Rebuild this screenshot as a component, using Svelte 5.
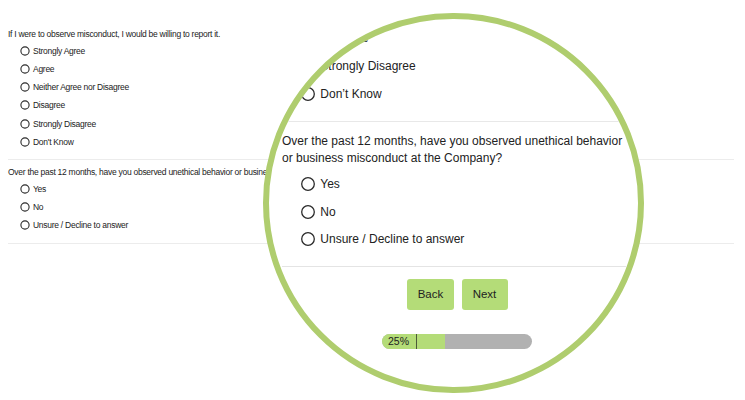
<script lang="ts">
  interface Question {
    text: string;
    options: string[];
  }

  const agreement: Question = {
    text: 'If I were to observe misconduct, I would be willing to report it.',
    options: [
      'Strongly Agree',
      'Agree',
      'Neither Agree nor Disagree',
      'Disagree',
      'Strongly Disagree',
      "Don't Know"
    ]
  };

  const observed: Question = {
    text: 'Over the past 12 months, have you observed unethical behavior or business misconduct at the Company?',
    options: ['Yes', 'No', 'Unsure / Decline to answer']
  };

  const questions = [agreement, observed];

  // Options of the first question that are visible in the lens
  const lensOptions = ['Disagree', 'Strongly Disagree', 'Don’t Know'];

  let progress = 25;
  let filled = 42;
</script>

<div class="page">
  <div class="survey">
    {#each questions as question}
      <section class="question">
        <p class="question-text">{question.text}</p>
        <div class="options">
          {#each question.options as option}
            <div class="option">
              <svg class="radio" viewBox="0 0 10 10"><circle cx="5" cy="5" r="4.1" /></svg>
              <span class="label">{option}</span>
            </div>
          {/each}
        </div>
      </section>
    {/each}
  </div>

  <!-- Magnified part of the survey -->
  <div class="lens">
    <div class="lens-content">
      <div class="options first">
        {#each lensOptions as option}
          <div class="option">
            <svg class="radio" viewBox="0 0 14 14"><circle cx="7" cy="7" r="6.3" /></svg>
            <span class="label">{option}</span>
          </div>
        {/each}
      </div>
      <section class="lens-question">
        <p class="question-text">{observed.text}</p>
        <div class="options">
          {#each observed.options as option}
            <div class="option">
              <svg class="radio" viewBox="0 0 14 14"><circle cx="7" cy="7" r="6.3" /></svg>
              <span class="label">{option}</span>
            </div>
          {/each}
        </div>
      </section>
      <div class="buttons">
        <button class="back">Back</button>
        <button class="next">Next</button>
      </div>
      <div class="progress">
        <div class="progress-fill" style="width: {filled}%">
          <span class="progress-value">{progress}%</span>
        </div>
      </div>
    </div>
  </div>
</div>

<style>
  :global(body) {
    background: #fff;
  }

  .page {
    position: relative;
    box-sizing: border-box;
    width: 745px;
    height: 400px;
    padding: 28px 11px 0 8px;
    overflow: hidden;
    font-family: "Liberation Sans", Arial, sans-serif;
    color: #222;
  }

  .question-text {
    margin: 0;
  }

  .option {
    display: flex;
    align-items: center;
  }

  .radio {
    display: block;
    flex-shrink: 0;
    fill: none;
    stroke: #2a2a2a;
    stroke-width: 1.3;
  }

  /* Survey behind the lens */
  .question {
    border-bottom: 1px solid #ececec;
    margin-bottom: 6px;
    font-size: 8.5px;
    letter-spacing: -0.27px;
    white-space: nowrap;
  }

  .question .question-text {
    height: 14px;
    line-height: 13px;
  }

  .question .options {
    padding: 0 0 8px 12px;
  }

  .question .option {
    height: 18.15px;
    gap: 3px;
  }

  .question .radio {
    width: 10px;
    height: 10px;
    stroke-width: 1.1;
  }

  .question:last-child .options {
    padding-bottom: 9px;
  }

  /* Lens */
  .lens {
    position: absolute;
    top: 12.5px;
    left: 263px;
    box-sizing: border-box;
    width: 380.5px;
    height: 380.5px;
    border: 6px solid #afcd6e;
    border-radius: 50%;
    background: #fff;
    overflow: hidden;
  }

  .lens-content {
    padding: 6px 0 0 13px;
    font-size: 12px;
  }

  .lens-content .options {
    padding-left: 19.3px;
  }

  .lens-content .option {
    height: 27.7px;
    gap: 5px;
  }

  .lens-content .radio {
    width: 14px;
    height: 14px;
  }

  .first {
    padding-bottom: 13px;
    border-bottom: 1px solid #e8e8e8;
  }

  .lens-question {
    padding-top: 11px;
    padding-bottom: 12.5px;
    border-bottom: 1px solid #e4e4e4;
  }

  .lens-question .question-text {
    width: 350px;
    margin-bottom: 3.5px;
    line-height: 17px;
  }

  .buttons {
    display: flex;
    gap: 7.5px;
    padding: 12px 0 0 125px;
  }

  button {
    height: 31px;
    padding: 0;
    border: none;
    border-radius: 3px;
    background: #b4dc78;
    font-family: inherit;
    font-size: 11.5px;
    color: #222;
  }

  .back {
    width: 47px;
  }

  .next {
    width: 46px;
  }

  .progress {
    width: 150px;
    height: 15px;
    margin: 24px 0 0 100px;
    border-radius: 8px;
    background: #b1b1b1;
    overflow: hidden;
  }

  .progress-fill {
    height: 100%;
    background: #b4dc78;
  }

  .progress-value {
    display: block;
    box-sizing: border-box;
    width: 35px;
    padding-left: 6px;
    border-right: 1px solid #4c5a38;
    font-size: 10.5px;
    line-height: 15px;
  }
</style>
